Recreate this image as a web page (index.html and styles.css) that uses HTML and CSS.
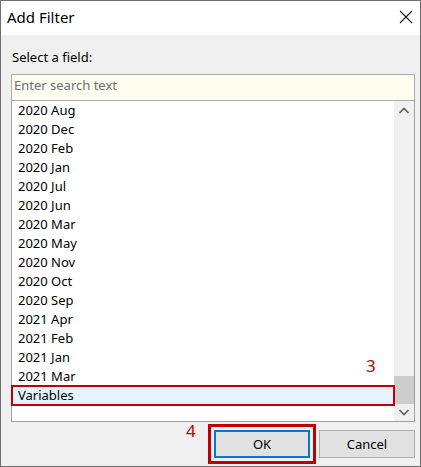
FILE: index.html
```html
<!DOCTYPE html>
<html>
<head>
<meta charset="utf-8">
<link rel="stylesheet" href="styles.css">
</head>
<body>
<div class="dialog">
  <div class="titlebar">
    <span class="title">Add Filter</span>
    <svg class="close" width="14" height="14" viewBox="0 0 14 14"><path d="M1 1 L13 13 M13 1 L1 13" stroke="#1a1a1a" stroke-width="1.1" fill="none"/></svg>
  </div>
  <div class="content">
    <div class="label">Select a field:</div>
    <div class="search"><span class="placeholder">Enter search text</span></div>
    <div class="list">
      <div class="rows">
        <div class="row">2020 Aug</div>
        <div class="row">2020 Dec</div>
        <div class="row">2020 Feb</div>
        <div class="row">2020 Jan</div>
        <div class="row">2020 Jul</div>
        <div class="row">2020 Jun</div>
        <div class="row">2020 Mar</div>
        <div class="row">2020 May</div>
        <div class="row">2020 Nov</div>
        <div class="row">2020 Oct</div>
        <div class="row">2020 Sep</div>
        <div class="row">2021 Apr</div>
        <div class="row">2021 Feb</div>
        <div class="row">2021 Jan</div>
        <div class="row">2021 Mar</div>
        <div class="row selected">Variables</div>
      </div>
      <div class="scrollbar">
        <div class="sb-btn"><svg width="20" height="17" viewBox="0 0 20 17"><path d="M5.5 12 L10 7.5 L14.5 12" stroke="#606060" stroke-width="1.6" fill="none"/></svg></div>
        <div class="track"><div class="thumb"></div></div>
        <div class="sb-btn"><svg width="20" height="17" viewBox="0 0 20 17"><path d="M5.5 6 L10 10.5 L14.5 6" stroke="#606060" stroke-width="1.6" fill="none"/></svg></div>
      </div>
      <span class="note note-3">3</span>
    </div>
    <div class="footer">
      <span class="note note-4">4</span>
      <button class="btn btn-ok">OK</button>
      <button class="btn">Cancel</button>
    </div>
  </div>
</div>
</body>
</html>
```
FILE: styles.css
```css
html, body {
  margin: 0;
  padding: 0;
  background: #ffffff;
}
.dialog {
  box-sizing: border-box;
  width: 421px;
  height: 467px;
  border: 1px solid #6e6e6e;
  background: #f0f0f0;
  display: flex;
  flex-direction: column;
  font-family: "Noto Sans", "Open Sans", sans-serif;
  font-size: 13px;
  color: #000;
}
.titlebar {
  height: 34px;
  background: #ffffff;
  display: flex;
  align-items: center;
  justify-content: space-between;
  padding: 0 7px 0 6px;
}
.title {
  font-size: 15px;
  line-height: 20px;
  margin-top: -2px;
}
.close {
  display: block;
  margin-top: -2px;
}
.content {
  display: flex;
  flex-direction: column;
  padding: 0 5px 0 10px;
  position: relative;
}
.label {
  margin-top: 13px;
  line-height: 18px;
  padding-left: 1px;
}
.search {
  margin-top: 8px;
  box-sizing: border-box;
  height: 27px;
  border: 1px solid #adadad;
  background: #fdfdf0;
  padding: 1px 2px 0;
  line-height: 18px;
}
.placeholder {
  color: #707070;
}
.list {
  position: relative;
  box-sizing: border-box;
  height: 321px;
  border: 1px solid #a0a0a0;
  border-top: none;
  background: #ffffff;
  display: flex;
}
.rows {
  flex: 1;
  display: flex;
  flex-direction: column;
}
.row {
  height: 19px;
  line-height: 19px;
  padding-left: 6px;
}
.row.selected {
  background: #e5f3ff;
  outline: 2px solid #c00000;
  outline-offset: -1px;
  position: relative;
}
.scrollbar {
  width: 20px;
  background: #f0f0f0;
  display: flex;
  flex-direction: column;
}
.sb-btn {
  height: 17px;
}
.sb-btn svg {
  display: block;
}
.track {
  flex: 1;
  display: flex;
  flex-direction: column;
  justify-content: flex-end;
}
.thumb {
  height: 28px;
  background: #cdcdcd;
}
.note {
  position: absolute;
  color: #c00000;
  font-size: 17px;
  line-height: 20px;
}
.note-3 {
  left: 354px;
  top: 255px;
}
.note-4 {
  left: 175px;
  top: -9px;
}
.footer {
  position: relative;
  display: flex;
  justify-content: flex-end;
  gap: 9px;
  margin-top: 8px;
}
.btn {
  box-sizing: border-box;
  width: 96px;
  height: 28px;
  border: 1px solid #adadad;
  background: #e1e1e1;
  font-family: "Noto Sans", "Open Sans", sans-serif;
  font-size: 13px;
  color: #000;
  padding: 0;
  margin: 0;
}
.btn-ok {
  border: 2px solid #0078d7;
  outline: 3px solid #c00000;
  outline-offset: 3px;
}
```
